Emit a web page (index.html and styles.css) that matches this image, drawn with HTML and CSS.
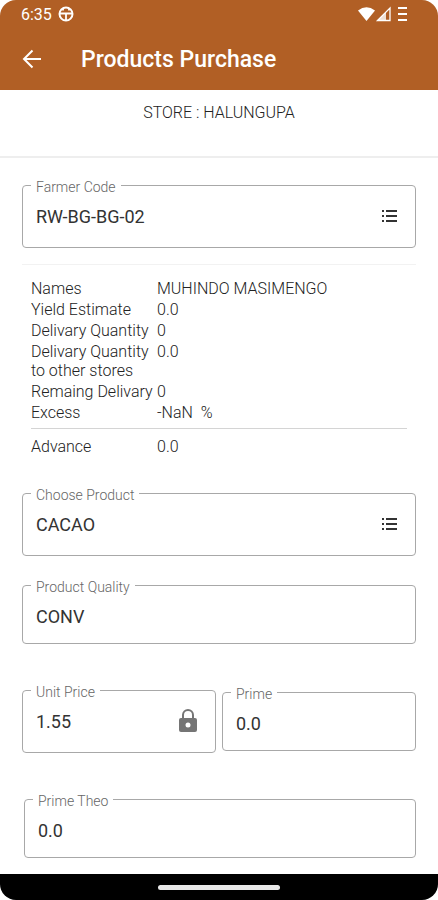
FILE: index.html
```html
<!DOCTYPE html>
<html lang="en">
<head>
    <meta charset="UTF-8">
    <meta name="viewport" content="width=device-width, initial-scale=1.0">
    <title>Products Purchase</title>
    <link rel="stylesheet" href="styles.css">
</head>
<body>
    <div class="screen">
        <header class="header">
            <div class="status">
                <span>6:35</span>
                <svg class="status-app" width="16" height="16" viewBox="0 0 16 16" fill="none" stroke="#fff" stroke-width="2">
                    <circle cx="8" cy="8" r="6.5"/>
                    <path d="M2 7.500h12M8 8v6M5 2.500v2M11 2.500v2" stroke-width="1.800"/>
                </svg>
                <svg class="status-icons" width="50" height="16" viewBox="0 0 50 16">
                    <path d="M0 4.500Q8.500-2 17 4.500L8.500 15z" fill="#fff"/>
                    <path d="M19.500 14.500L32 2v12.500z" fill="none" stroke="#fff" stroke-width="1.300"/>
                    <path d="M19 15L28 6v9z" fill="#fff" opacity=".8"/>
                    <path d="M40 2h9M40 8h9M40 14h9" stroke="#fff" stroke-width="2"/>
                </svg>
            </div>
            <div class="toolbar">
                <button type="button" class="back" aria-label="Back">
                    <svg width="20" height="20" viewBox="0 0 20 20" fill="none" stroke="#fff" stroke-width="2">
                        <path d="M19 10H2.500M10.500 1.500L2 10l8.500 8.500"/>
                    </svg>
                </button>
                <h1>Products Purchase</h1>
            </div>
        </header>

        <div class="store">STORE : HALUNGUPA</div>

        <form class="form">
            <fieldset class="field tall">
                <legend><label for="farmer">Farmer Code</label></legend>
                <div class="control">
                    <input type="text" id="farmer" value="RW-BG-BG-02">
                    <button type="button" class="icon" aria-label="Choose farmer">
                        <svg width="16" height="14" viewBox="0 0 16 14" stroke="#333" stroke-width="2">
                            <path d="M0 2h2M4 2h11M0 7h2M4 7h11M0 12h2M4 12h11"/>
                        </svg>
                    </button>
                </div>
            </fieldset>

            <div class="details">
                <table>
                    <tr><th>Names</th><td>MUHINDO MASIMENGO</td></tr>
                    <tr><th>Yield Estimate</th><td>0.0</td></tr>
                    <tr><th>Delivary Quantity</th><td>0</td></tr>
                    <tr><th>Delivary Quantity to other stores</th><td>0.0</td></tr>
                    <tr><th>Remaing Delivary</th><td>0</td></tr>
                    <tr><th>Excess</th><td>-NaN&nbsp; %</td></tr>
                </table>
                <table class="advance">
                    <tr><th>Advance</th><td>0.0</td></tr>
                </table>
            </div>

            <fieldset class="field tall">
                <legend><label for="product">Choose Product</label></legend>
                <div class="control">
                    <input type="text" id="product" value="CACAO">
                    <button type="button" class="icon" aria-label="Choose product">
                        <svg width="16" height="14" viewBox="0 0 16 14" stroke="#333" stroke-width="2">
                            <path d="M0 2h2M4 2h11M0 7h2M4 7h11M0 12h2M4 12h11"/>
                        </svg>
                    </button>
                </div>
            </fieldset>

            <fieldset class="field quality">
                <legend><label for="quality">Product Quality</label></legend>
                <div class="control">
                    <input type="text" id="quality" value="CONV">
                </div>
            </fieldset>

            <div class="row">
                <fieldset class="field tall">
                    <legend><label for="price">Unit Price</label></legend>
                    <div class="control">
                        <input type="text" id="price" value="1.55" readonly>
                        <svg class="lock" width="20" height="24" viewBox="0 0 20 24">
                            <path d="M5 10V6a5 5 0 0 1 10 0v4" fill="none" stroke="#757575" stroke-width="2"/>
                            <rect x="1" y="9" width="18" height="14" rx="2" fill="#757575"/>
                            <circle cx="10" cy="16" r="2.500" fill="#fff"/>
                        </svg>
                    </div>
                </fieldset>
                <fieldset class="field">
                    <legend><label for="prime">Prime</label></legend>
                    <div class="control">
                        <input type="text" id="prime" value="0.0">
                    </div>
                </fieldset>
            </div>

            <fieldset class="field theo">
                <legend><label for="theo">Prime Theo</label></legend>
                <div class="control">
                    <input type="text" id="theo" value="0.0">
                </div>
            </fieldset>
        </form>

        <div class="navbar"><span class="pill"></span></div>
    </div>
</body>
</html>
```
FILE: styles.css
```css
* {
    box-sizing: border-box;
}
body {
    margin: 0;
    background: #fff;
    color: #222;
    font-family: Roboto, sans-serif;
    font-size: 16px;
    font-weight: 300;
}
button {
    padding: 0;
    border: 0;
    background: none;
}
svg {
    display: block;
}
.screen {
    display: flex;
    flex-direction: column;
    min-height: 100vh;
    border-radius: 16px;
    overflow: hidden;
}
.header {
    background: #b15f25;
    color: #fff;
}
.status {
    display: flex;
    align-items: center;
    height: 28px;
    padding: 0 30px 0 21px;
    font-weight: 400;
}
.status-app {
    margin-left: 6px;
}
.status-icons {
    margin-left: auto;
}
.toolbar {
    display: flex;
    align-items: center;
    gap: 39px;
    height: 62px;
    padding: 0 22px;
}
h1 {
    margin: 0;
    font-size: 23px;
    font-weight: 500;
}
.store {
    height: 68px;
    padding-top: 13px;
    border-bottom: 2px solid #eee;
    line-height: 20px;
    text-align: center;
}
.form {
    padding: 18px 22px 14px;
}

/* outlined text boxes, the legend makes the gap in the border */
.field {
    min-width: 0;
    margin: 0;
    padding: 0 8px 5px;
    border: 1px solid #a8a8a8;
    border-radius: 4px;
}
.tall {
    padding-bottom: 9px;
}
legend {
    padding: 4px 5px 0;
    color: #666;
    font-size: 14px;
    line-height: 14px;
}
legend label {
    display: block;
}
.control {
    display: flex;
    align-items: center;
    height: 44px;
    padding: 0 9px 0 5px;
}
.control input {
    flex: 1;
    min-width: 0;
    padding: 0;
    border: 0;
    outline: 0;
    background: none;
    color: #333;
    font: 18px Roboto, sans-serif;
}
.lock {
    flex: none;
}

.details {
    margin: 16px 0 27px;
    padding: 13px 9px 0;
    border-top: 1px solid #f2f2f2;
}
table {
    width: 100%;
    border-spacing: 0;
    table-layout: fixed;
}
th, td {
    padding: 1px 0;
    font-weight: 300;
    line-height: 19px;
    text-align: left;
    vertical-align: top;
}
th {
    width: 126px;
}
.advance {
    margin-top: 5px;
    padding-top: 7px;
    border-top: 1px solid #d4d4d4;
}
.quality {
    margin-top: 20px;
}
.row {
    display: grid;
    grid-template-columns: 1fr 1fr;
    align-items: center;
    gap: 6px;
    margin: 37px 0;
}
.theo {
    margin-left: 2px;
}
.navbar {
    display: flex;
    justify-content: center;
    align-items: center;
    height: 26px;
    margin-top: auto;
    background: #000;
}
.pill {
    width: 28%;
    height: 5px;
    border-radius: 3px;
    background: #e8e8e8;
}
```
